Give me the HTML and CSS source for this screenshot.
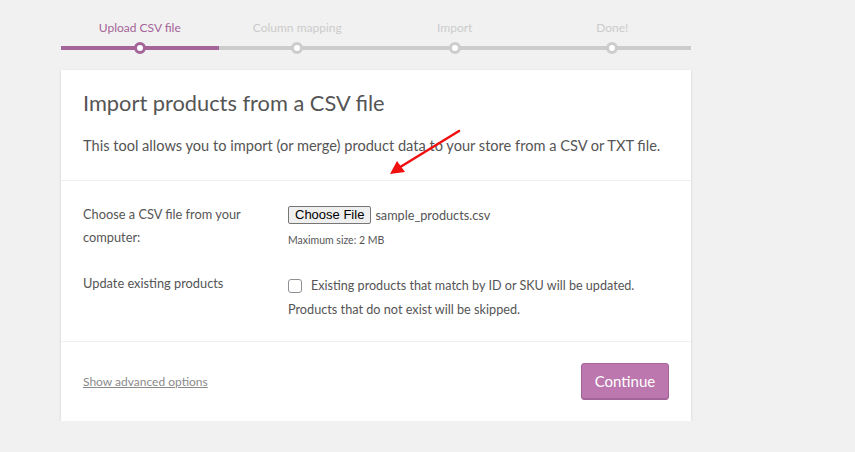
FILE: index.html
```html
<!DOCTYPE html>
<html lang="en">
<head>
<meta charset="utf-8">
<title>Import products</title>
<link rel="stylesheet" href="styles.css">
</head>
<body>
<div class="wrap">
  <ol class="steps">
    <li class="step active">Upload CSV file</li>
    <li class="step">Column mapping</li>
    <li class="step">Import</li>
    <li class="step">Done!</li>
  </ol>
  <div class="card">
    <header class="card-head">
      <h2 class="title">Import products from a CSV file</h2>
      <p class="desc">This tool allows you to import (or merge) product data to your store from a CSV or TXT file.</p>
      <svg class="arrow" width="80" height="50" viewBox="0 0 80 50">
        <line x1="76" y1="2" x2="14" y2="40" stroke="#f01010" stroke-width="2.5" stroke-linecap="round"/>
        <polygon points="7,45 14,32 22,43" fill="#f01010"/>
      </svg>
    </header>
    <section class="card-body">
      <div class="row">
        <div class="label">Choose a CSV file from your computer:</div>
        <div class="field">
          <div class="file-line"><span class="file-btn">Choose File</span><span class="file-name">sample_products.csv</span></div>
          <div class="hint">Maximum size: 2 MB</div>
        </div>
      </div>
      <div class="row row-update">
        <div class="label">Update existing products</div>
        <div class="field">
          <div class="check-line"><span class="checkbox"></span><span>Existing products that match by ID or SKU will be updated.</span></div>
          <div class="check-note">Products that do not exist will be skipped.</div>
        </div>
      </div>
    </section>
    <footer class="card-foot">
      <a class="adv" href="#">Show advanced options</a>
      <span class="continue">Continue</span>
    </footer>
  </div>
</div>
</body>
</html>
```
FILE: styles.css
```css
html, body {
  margin: 0;
  padding: 0;
  background: #f1f1f1;
}
body {
  font-family: "Lato", "Open Sans", sans-serif;
  color: #555;
}
.wrap {
  width: 630px;
  margin-left: 61px;
  padding-top: 18px;
}
.steps {
  list-style: none;
  margin: 0;
  padding: 0;
  display: flex;
}
.step {
  flex: 1;
  text-align: center;
  font-size: 12px;
  color: #ccc;
  line-height: 18px;
  padding-top: 1px;
  padding-bottom: 9px;
  border-bottom: 4px solid #ccc;
  position: relative;
}
.step::after {
  content: "";
  position: absolute;
  left: 50%;
  bottom: -8px;
  width: 6px;
  height: 6px;
  margin-left: -6px;
  border: 3px solid #ccc;
  border-radius: 50%;
  background: #fff;
}
.step.active {
  color: #a46497;
  border-bottom-color: #a46497;
}
.step.active::after {
  border-color: #a46497;
}
.card {
  margin-top: 20px;
  background: #fff;
  box-shadow: 0 1px 3px rgba(0,0,0,0.13);
}
.card-head {
  position: relative;
  padding: 19px 22px 0;
  height: 91px;
  border-bottom: 1px solid #eee;
}
.title {
  margin: 0;
  font-weight: 400;
  font-size: 21.8px;
  line-height: 28px;
  color: #555;
}
.desc {
  margin: 19px 0 0;
  font-size: 14.6px;
  line-height: 20px;
  color: #555;
}
.arrow {
  position: absolute;
  left: 322px;
  top: 59px;
}
.card-body {
  padding: 22px 22px 0;
  height: 138px;
  border-bottom: 1px solid #eee;
}
.row {
  display: flex;
}
.label {
  width: 205px;
  font-size: 12.8px;
  line-height: 23px;
  color: #555;
  padding-right: 30px;
  box-sizing: border-box;
}
.field {
  flex: 1;
}
.file-line {
  display: flex;
  align-items: center;
  height: 23px;
}
.file-btn {
  display: inline-block;
  font-family: "Liberation Sans", Arial, sans-serif;
  font-size: 13px;
  color: #000;
  background: #efefef;
  border: 1px solid #767676;
  border-radius: 2px;
  padding: 0 6px;
  height: 16px;
  line-height: 16px;
  margin-right: 4px;
}
.file-name {
  color: #555;
  font-size: 12.7px;
}
.hint {
  font-size: 10.5px;
  color: #555;
  margin-top: 8px;
}
.row-update {
  margin-top: 23px;
}
.check-line {
  display: flex;
  align-items: center;
  font-size: 12.6px;
  line-height: 20px;
  margin-top: 4px;
}
.checkbox {
  width: 12px;
  height: 12px;
  border: 1px solid #8c8f94;
  border-radius: 3px;
  margin-right: 9px;
  background: #fff;
}
.check-note {
  font-size: 12.7px;
  line-height: 20px;
  margin-top: 3px;
}
.card-foot {
  display: flex;
  justify-content: space-between;
  align-items: center;
  padding: 21px 22px 21px;
}
.adv {
  font-size: 12px;
  color: #8a8a8a;
  text-decoration: underline;
}
.continue {
  display: inline-block;
  width: 86px;
  height: 35px;
  line-height: 35px;
  text-align: center;
  font-size: 15px;
  color: #fff;
  background: #bb77ae;
  border: 1px solid #a36597;
  border-radius: 3px;
  box-shadow: inset 0 -1px 0 #a36597;
}
```
